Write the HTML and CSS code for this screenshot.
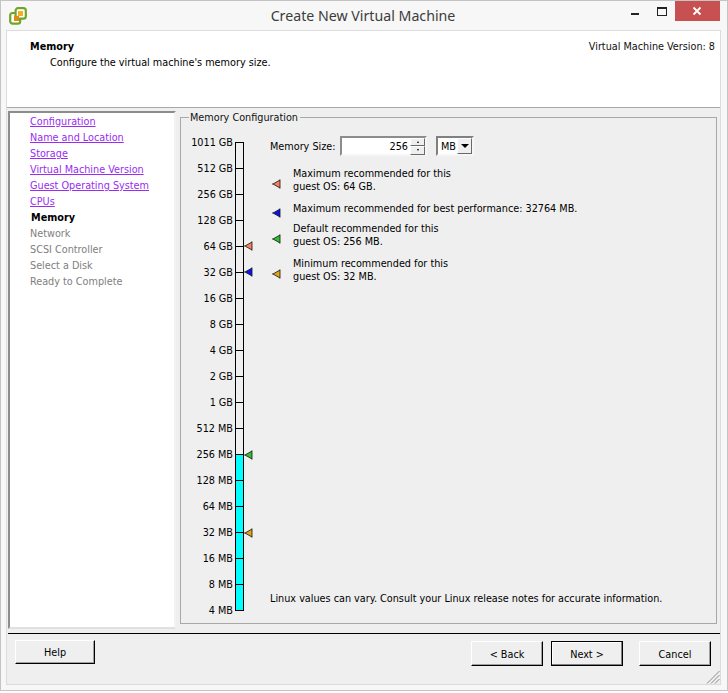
FILE: index.html
```html
<!DOCTYPE html>
<html lang="en">
<head>
<meta charset="utf-8">
<title>Create New Virtual Machine</title>
<link rel="stylesheet" href="styles.css">
</head>
<body>
<svg class="defs" width="0" height="0" aria-hidden="true">
  <symbol id="tri" viewBox="0 0 9 10"><path d="M1 5 8 1v8z" fill="currentColor"/><path d="M0 5 1 5 8 1M8 .5v9M1 5 8 9" fill="none" stroke="#111" stroke-width=".8"/></symbol>
</svg>
<div class="window">
  <div class="titlebar">
    <svg class="logo" width="18" height="18" viewBox="0 0 18 18" aria-hidden="true">
      <rect x="1.2" y="6" width="10" height="10.6" rx="2.4" fill="#fff" stroke="#6fa528" stroke-width="2.2"/>
      <rect x="6.6" y="1.2" width="10.2" height="10.4" rx="2.4" fill="#fff" stroke="#6fa528" stroke-width="2.2"/>
      <path d="M5 8.8h5V14H5z" fill="#e08a10"/>
      <path d="M9 4h5v5H9z" fill="#f2b020"/>
    </svg>
    <div class="title">Create New Virtual Machine</div>
    <div class="controls">
      <span class="min"></span>
      <span class="max"></span>
      <svg class="close" width="45" height="20" viewBox="0 0 45 20" aria-hidden="true">
        <path d="M18.5 6.5l7 7m0-7l-7 7" stroke="#fff" stroke-width="1.8"/>
      </svg>
    </div>
  </div>
  <div class="client">
    <header class="head">
      <div class="head-text">
        <div class="head-title">Memory</div>
        <div class="head-sub">Configure the virtual machine's memory size.</div>
      </div>
      <div class="version">Virtual Machine Version: 8</div>
    </header>
    <div class="main">
      <nav class="nav">
        <a href="#">Configuration</a>
        <a href="#">Name and Location</a>
        <a href="#">Storage</a>
        <a href="#">Virtual Machine Version</a>
        <a href="#">Guest Operating System</a>
        <a href="#">CPUs</a>
        <span class="current">Memory</span>
        <span class="off">Network</span>
        <span class="off">SCSI Controller</span>
        <span class="off">Select a Disk</span>
        <span class="off">Ready to Complete</span>
      </nav>
      <fieldset class="group">
        <legend>Memory Configuration</legend>
        <div class="scale">
          <div class="labels">
            <span>1011 GB</span><span>512 GB</span><span>256 GB</span><span>128 GB</span><span>64 GB</span><span>32 GB</span><span>16 GB</span><span>8 GB</span><span>4 GB</span><span>2 GB</span><span>1 GB</span><span>512 MB</span><span>256 MB</span><span>128 MB</span><span>64 MB</span><span>32 MB</span><span>16 MB</span><span>8 MB</span><span>4 MB</span>
          </div>
          <div class="track">
            <svg class="pin pin-max c-max" width="9" height="10"><use href="#tri"/></svg>
            <svg class="pin pin-best c-best" width="9" height="10"><use href="#tri"/></svg>
            <svg class="pin pin-def c-def" width="9" height="10"><use href="#tri"/></svg>
            <svg class="pin pin-min c-min" width="9" height="10"><use href="#tri"/></svg>
          </div>
        </div>
        <div class="panel">
          <div class="size-row">
            <span class="size-label">Memory Size:</span>
            <div class="spin">
              <span class="spin-value">256</span>
              <div class="spin-btns">
                <span class="spin-btn"><i class="up"></i></span>
                <span class="spin-btn"><i class="down"></i></span>
              </div>
            </div>
            <div class="combo">
              <span class="combo-value">MB</span>
              <span class="combo-btn"><i></i></span>
            </div>
          </div>
          <div class="recs">
            <div class="rec r1"><svg class="c-max" width="9" height="10"><use href="#tri"/></svg><p>Maximum recommended for this<br>guest OS: 64 GB.</p></div>
            <div class="rec r2"><svg class="c-best" width="9" height="10"><use href="#tri"/></svg><p>Maximum recommended for best performance: 32764 MB.</p></div>
            <div class="rec r3"><svg class="c-def" width="9" height="10"><use href="#tri"/></svg><p>Default recommended for this<br>guest OS: 256 MB.</p></div>
            <div class="rec r4"><svg class="c-min" width="9" height="10"><use href="#tri"/></svg><p>Minimum recommended for this<br>guest OS: 32 MB.</p></div>
          </div>
          <div class="note">Linux values can vary. Consult your Linux release notes for accurate information.</div>
        </div>
      </fieldset>
    </div>
    <footer class="foot">
      <button class="btn help">Help</button>
      <div class="nav-btns">
        <button class="btn">&lt; Back</button>
        <button class="btn default">Next &gt;</button>
        <button class="btn cancel">Cancel</button>
      </div>
      <svg class="grip" width="14" height="14" viewBox="0 0 14 14" aria-hidden="true">
        <path d="M13.5 1 1 13.5M13.5 5 5 13.5M13.5 9 9 13.5" stroke="#8a8a8a" stroke-width="1"/>
      </svg>
    </footer>
  </div>
</div>
</body>
</html>
```
FILE: styles.css
```css
* { box-sizing: border-box; }
html, body { margin: 0; padding: 0; }
body {
  width: 728px;
  height: 693px;
  background: #fff;
  font: 10.75px/13px "DejaVu Sans Condensed", "Liberation Sans", Arial, sans-serif;
  color: #000;
  overflow: hidden;
  white-space: nowrap;
}
.defs { position: absolute; }
.window {
  width: 728px;
  height: 691px;
  background: #f7f7f7;
  border: 1px solid #c4c4c4;
  display: flex;
  flex-direction: column;
}
.titlebar {
  height: 29px;
  flex: none;
  display: flex;
  position: relative;
}
.logo { margin: 6px 0 0 8px; }
.title {
  position: absolute;
  left: 0; right: 2px; top: 6px;
  text-align: center;
  font: 14.2px/18px "Noto Sans", sans-serif;
  color: #3c3c3c;
}
.controls {
  margin-left: auto;
  margin-right: 7px;
  display: flex;
  align-items: flex-start;
  position: relative;
}
.min { width: 8px; height: 2px; background: #222; margin-top: 12px; margin-right: 18px; }
.max { width: 10px; height: 9px; border: 1px solid #222; border-top-width: 2px; margin-top: 6px; margin-right: 8px; }
.close { background: #c75050; display: block; }
.client {
  margin: 0 6px 0 5px;
  height: 655px;
  border: 1px solid #dcdcdc;
  background: #efefef;
  display: flex;
  flex-direction: column;
  position: relative;
}
.head {
  height: 77px;
  flex: none;
  background: #fff;
  border-bottom: 1px solid #a8a8a8;
  display: flex;
  justify-content: space-between;
  padding: 9px 5px 0 23px;
}
.head-title { font-weight: bold; }
.head-sub { margin: 3px 0 0 20px; }
.version { color: #111; }
.main {
  flex: none;
  height: 521px;
  display: flex;
  padding: 3px 0 0 1px;
}
.nav {
  width: 168px;
  height: 518px;
  background: #fff;
  border: 2px solid;
  border-color: #8c8c8c #f2f2f2 #e0e0e0 #8c8c8c;
  padding: 1px 0 0 20px;
  display: flex;
  flex-direction: column;
}
.nav a, .nav span { height: 16px; line-height: 16px; }
.nav a { color: #9a2cf0; text-decoration: underline; }
.nav .current { font-weight: bold; margin-left: 1px; }
.nav .off { color: #808080; }
.group {
  margin: 0 0 0 4px;
  padding: 0;
  width: 537px;
  height: 513px;
  border: 1px solid #a8a8a8;
  display: flex;
  min-width: 0;
}
.group legend {
  padding: 0 2px 0 1px;
  margin-left: 8px;
  height: 13px;
  line-height: 14px;
  color: #111;
}
.scale { width: 89px; flex: none; height: 480px; display: flex; position: relative; }
.labels {
  width: 52px;
  flex: none;
  display: flex;
  flex-direction: column;
  margin-top: 6px;
}
.labels span { height: 26px; line-height: 26px; text-align: right; }
.track {
  width: 9px;
  height: 469px;
  margin: 18px 0 0 2px;
  border-left: 1px solid #000;
  border-right: 1px solid #000;
  position: relative;
  background:
    repeating-linear-gradient(to bottom, #000 0, #000 1px, transparent 1px, transparent 26px),
    linear-gradient(to bottom, transparent 312px, #00ffff 312px);
}
.pin { position: absolute; left: 8px; }
.pin-max { top: 99px; }
.pin-best { top: 125px; }
.pin-def { top: 308px; }
.pin-min { top: 386px; }
.c-max { color: #f4805c; }
.c-best { color: #0a14f0; }
.c-def { color: #30c030; }
.c-min { color: #e0a418; }
.panel {
  flex: 1;
  display: flex;
  flex-direction: column;
  padding-right: 10px;
  height: 498px;
}
.size-row {
  display: flex;
  align-items: center;
  margin-top: 12px;
  height: 20px;
}
.size-label { width: 70px; flex: none; }
.spin {
  width: 87px;
  height: 20px;
  background: #fff;
  border: 2px solid;
  border-color: #8c8c8c #f6f6f6 #f6f6f6 #8c8c8c;
  display: flex;
  align-items: center;
  justify-content: flex-end;
}
.spin-value { padding-right: 2px; }
.spin-btns { width: 15px; height: 17px; display: flex; flex-direction: column; }
.spin-btn {
  flex: 1;
  background: #efefef;
  border-top: 1px solid #fff;
  border-left: 1px solid #fff;
  border-bottom: 1px solid #6a6a6a;
  border-right: 1px solid #6a6a6a;
  display: flex;
  align-items: center;
  justify-content: center;
}
.spin-btn i { width: 0; height: 0; border-left: 1.5px solid transparent; border-right: 1.5px solid transparent; }
.spin-btn .up { border-bottom: 2px solid #000; }
.spin-btn .down { border-top: 2px solid #000; }
.combo {
  margin-left: 9px;
  width: 38px;
  height: 20px;
  background: #fff;
  border: 2px solid;
  border-color: #808080 #f6f6f6 #f6f6f6 #808080;
  display: flex;
  align-items: center;
}
.combo-value { padding-left: 3px; width: 19px; }
.combo-btn {
  width: 15px;
  height: 16px;
  background: #efefef;
  border: 1px solid;
  border-color: #fff #6a6a6a #6a6a6a #fff;
  display: flex;
  align-items: center;
  justify-content: center;
}
.combo-btn i { width: 0; height: 0; border-left: 4px solid transparent; border-right: 4px solid transparent; border-top: 4px solid #000; }
.recs { display: flex; flex-direction: column; padding-top: 11px; }
.rec { display: flex; align-items: center; padding-left: 2px; }
.rec svg { flex: none; margin: 8px 12px 0 0; }
.rec p { margin: 0; }
.rec.r1 { height: 26px; }
.rec.r2 { height: 13px; margin-top: 9px; }
.rec.r3 { height: 26px; margin-top: 7px; }
.rec.r4 { height: 26px; margin-top: 9px; }
.note { margin-top: auto; margin-bottom: 17px; }
.foot {
  flex: 1;
  margin-top: 4px;
  border-top: 1px solid #000;
  display: flex;
  justify-content: space-between;
  align-items: flex-start;
  padding: 6px 9px 0 7px;
  position: relative;
  margin-left: 1px;
}
.btn {
  width: 80px;
  height: 24px;
  font: inherit;
  line-height: 14px;
  color: #000;
  background: #efefef;
  border: 1px solid;
  border-color: #fff #000 #000 #fff;
  box-shadow: inset -1px -1px 0 #a0a0a0;
  padding: 1px 0 0;
}
.nav-btns { display: flex; margin-top: 1px; }
.nav-btns .btn { width: 72px; height: 25px; margin-left: 8px; padding-top: 3px; }
.nav-btns .cancel { margin-left: 16px; }
.btn.default { border-color: #000; box-shadow: inset -1px -1px 0 #808080, inset 1px 1px 0 #fff; }
.grip { position: absolute; right: 0; bottom: 0; }
```
